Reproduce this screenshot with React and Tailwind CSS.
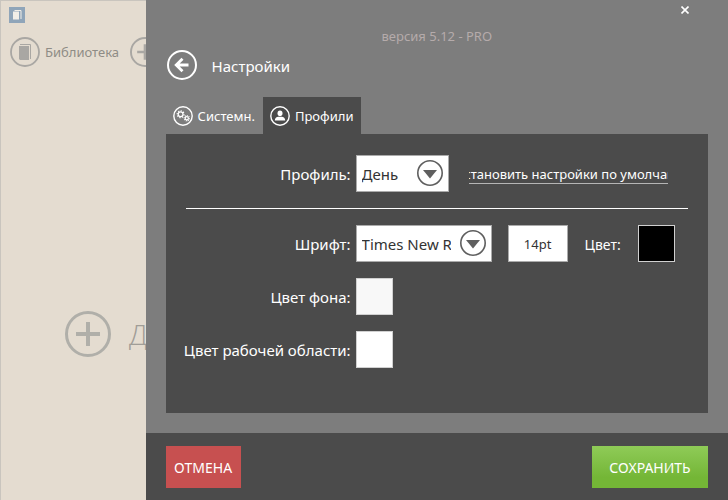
function BookIcon({ className }) {
  return (
    <svg viewBox="0 0 30 30" className={className} fill="none" aria-hidden="true">
      <circle cx="15" cy="15" r="14" stroke="currentColor" strokeWidth="1.8" />
      <path d="M10 7.5h10.5V22" stroke="currentColor" strokeWidth="1" />
      <path d="M9 9h10v14H10l-1-1z" fill="currentColor" />
    </svg>
  );
}

function PlusIcon({ className }) {
  return (
    <svg viewBox="0 0 46 46" className={className} fill="none" stroke="currentColor" strokeWidth="3" aria-hidden="true">
      <circle cx="23" cy="23" r="21.5" />
      <path d="M23 11v24M11 23h24" strokeWidth="4" />
    </svg>
  );
}

function BackIcon() {
  return (
    <svg viewBox="0 0 30 30" className="size-[30px]" fill="none" stroke="currentColor" aria-hidden="true">
      <circle cx="15" cy="15" r="14" strokeWidth="2" />
      <path d="M21.5 15H9.5M15.5 8.7L9.2 15l6.3 6.3" strokeWidth="2.8" />
    </svg>
  );
}

// toothed ring, the dashed stroke makes the teeth
function Gear({ cx, cy, r }) {
  return (
    <g fill="none" stroke="currentColor">
      <circle cx={cx} cy={cy} r={r} strokeWidth="1.2" />
      <circle cx={cx} cy={cy} r={r + 1} strokeWidth="1.2" pathLength="16" strokeDasharray="1 1" />
    </g>
  );
}

function GearsIcon() {
  return (
    <svg viewBox="0 0 20 20" className="size-5" aria-hidden="true">
      <circle cx="10" cy="10" r="9.2" fill="none" stroke="currentColor" strokeWidth="1.4" />
      <Gear cx={7.6} cy={8.2} r={2.4} />
      <Gear cx={13.8} cy={12.2} r={1.6} />
    </svg>
  );
}

function UserIcon() {
  return (
    <svg viewBox="0 0 20 20" className="size-5" aria-hidden="true">
      <circle cx="10" cy="10" r="9.2" fill="none" stroke="currentColor" strokeWidth="1.4" />
      <ellipse cx="10" cy="7.2" rx="2.5" ry="2.8" fill="currentColor" />
      <path d="M4.8 14.6c0-2.6 1.6-3.6 3.6-3.8h3.2c2 .2 3.6 1.2 3.6 3.8z" fill="currentColor" />
    </svg>
  );
}

function Select({ id, options, className }) {
  return (
    <div className={`relative h-[37px] ${className}`}>
      <select id={id} className="size-full appearance-none border border-[#ababab] bg-white pt-0.5 pl-[5px] pr-10 text-[15px] text-[#333]">
        {options.map(option => (
          <option key={option}>{option}</option>
        ))}
      </select>
      <svg viewBox="0 0 26 26" className="pointer-events-none absolute top-[5px] right-1.5 size-[26px] text-[#5f5f5f]" aria-hidden="true">
        <circle cx="13" cy="13" r="12.2" fill="none" stroke="currentColor" strokeWidth="1.6" />
        <path d="M6 10h14l-7 8.5z" fill="currentColor" />
      </svg>
    </div>
  );
}

function Swatch({ id, label, className }) {
  return <button type="button" id={id} aria-label={label} className={`size-[37px] border border-[#d0d0d0] ${className}`} />;
}

function Row({ id, label, children }) {
  return (
    <div className="-ml-0.5 flex items-center gap-[5px]">
      <label htmlFor={id} className="w-[167px] shrink-0 pt-0.5 text-right text-[15px] whitespace-nowrap">{label}</label>
      {children}
    </div>
  );
}

function Library() {
  return (
    <aside className="flex w-1/5 shrink-0 flex-col overflow-hidden border-t border-l border-[#c9c5be] bg-[#e4dcd0]">
      <div className="ml-2 mt-1.5 flex size-4 items-center justify-center bg-[#8fa5b9]">
        <svg viewBox="0 0 16 16" className="size-4" fill="none" aria-hidden="true">
          <path d="M5.5 3.5H12V12" stroke="#f2efe8" />
          <path d="M4 4.5h6v8H4z" fill="#f2efe8" />
        </svg>
      </div>
      <nav className="mt-3.5 ml-[9px] flex items-center gap-[11px] text-[13px] whitespace-nowrap text-[#8f8c86]">
        <a href="#library" className="flex items-center gap-[5px]">
          <BookIcon className="size-[30px] shrink-0 text-[#a9a7a3]" />
          <span className="pt-0.5">Библиотека</span>
        </a>
        <a href="#add" aria-label="Добавить" className="shrink-0">
          <PlusIcon className="size-[30px] text-[#a9a7a3]" />
        </a>
      </nav>
      <div className="flex flex-1 items-center pt-[101px] pl-16">
        <button type="button" className="flex items-center gap-[18px] font-['Open_Sans',sans-serif] text-[28px] font-light whitespace-nowrap text-[#a09d97]">
          <PlusIcon className="size-[46px] shrink-0 text-[#b0afa9]" />
          Добавить
        </button>
      </div>
    </aside>
  );
}

export default function App() {
  return (
    <div className="flex h-screen font-['Noto_Sans','Open_Sans',sans-serif]">
      <Library />

      <main className="flex min-w-0 flex-1 flex-col bg-[#7d7d7d] text-white">
        <header className="px-5">
          <div className="flex h-[26px] justify-end pr-4">
            <button type="button" aria-label="Закрыть" className="flex h-5 w-[14px] items-center justify-center">
              <svg viewBox="0 0 8 8" className="size-2" stroke="currentColor" strokeWidth="1.6" aria-hidden="true">
                <path d="M.5 .5l7 7M7.5 .5l-7 7" />
              </svg>
            </button>
          </div>
          <p className="text-center text-[13px] leading-5 text-[#b5abab]">версия 5.12 - PRO</p>
          <div className="mt-1 flex items-center gap-[15px] pl-px">
            <button type="button" aria-label="Назад"><BackIcon /></button>
            <h1 className="pt-0.5 text-[15px]">Настройки</h1>
          </div>
        </header>

        <div className="flex min-h-0 flex-1 flex-col px-5 pt-[17px] pb-5">
          <div className="flex h-[37px] text-[13px]" role="tablist">
            <button type="button" role="tab" aria-selected="false" className="flex items-center gap-[5px] pr-2 pl-[7px]">
              <GearsIcon />
              <span className="pt-0.5">Системн.</span>
            </button>
            <button type="button" role="tab" aria-selected="true" className="flex items-center gap-[5px] bg-[#4b4b4b] pr-2 pl-[7px]">
              <UserIcon />
              <span className="pt-0.5">Профили</span>
            </button>
          </div>

          <form className="flex flex-1 flex-col gap-4 bg-[#4b4b4b] px-5 pt-[21px]">
            <Row id="profile" label="Профиль:">
              <Select id="profile" options={['День', 'Ночь']} className="w-[93px] shrink-0" />
              <a href="#reset" className="mr-5 ml-[15px] flex min-w-0 flex-1 justify-center overflow-hidden border-b border-[#b5b5b5] pt-0.5 pl-3.5 text-[13px] leading-[17px] whitespace-nowrap">
                Установить настройки по умолчанию
              </a>
            </Row>
            <hr className="border-white" />
            <Row id="font" label="Шрифт:">
              <Select id="font" options={['Times New Roman', 'Arial']} className="w-[136px] shrink-0" />
              <input type="text" defaultValue="14pt" aria-label="Размер шрифта" className="ml-[11px] h-[37px] w-[60px] border border-[#ababab] bg-white text-center text-[13px] text-[#333]" />
              <label htmlFor="color" className="ml-3 pt-0.5 text-sm">Цвет:</label>
              <Swatch id="color" label="Цвет" className="ml-3 bg-black" />
            </Row>
            <Row id="background" label="Цвет фона:">
              <Swatch id="background" label="Цвет фона" className="bg-[#f8f8f8]" />
            </Row>
            <Row id="workspace" label="Цвет рабочей области:">
              <Swatch id="workspace" label="Цвет рабочей области" className="bg-white" />
            </Row>
          </form>
        </div>

        <footer className="flex items-center justify-between bg-[#4b4b4b] px-5 pt-[13px] pb-3 text-sm">
          <button type="button" className="h-[42px] w-[75px] bg-[#c75050] pt-0.5">ОТМЕНА</button>
          <button type="button" className="h-[42px] w-[116px] bg-linear-to-b from-[#8fcb57] to-[#74b636] to-75% pt-0.5">СОХРАНИТЬ</button>
        </footer>
      </main>
    </div>
  );
}
